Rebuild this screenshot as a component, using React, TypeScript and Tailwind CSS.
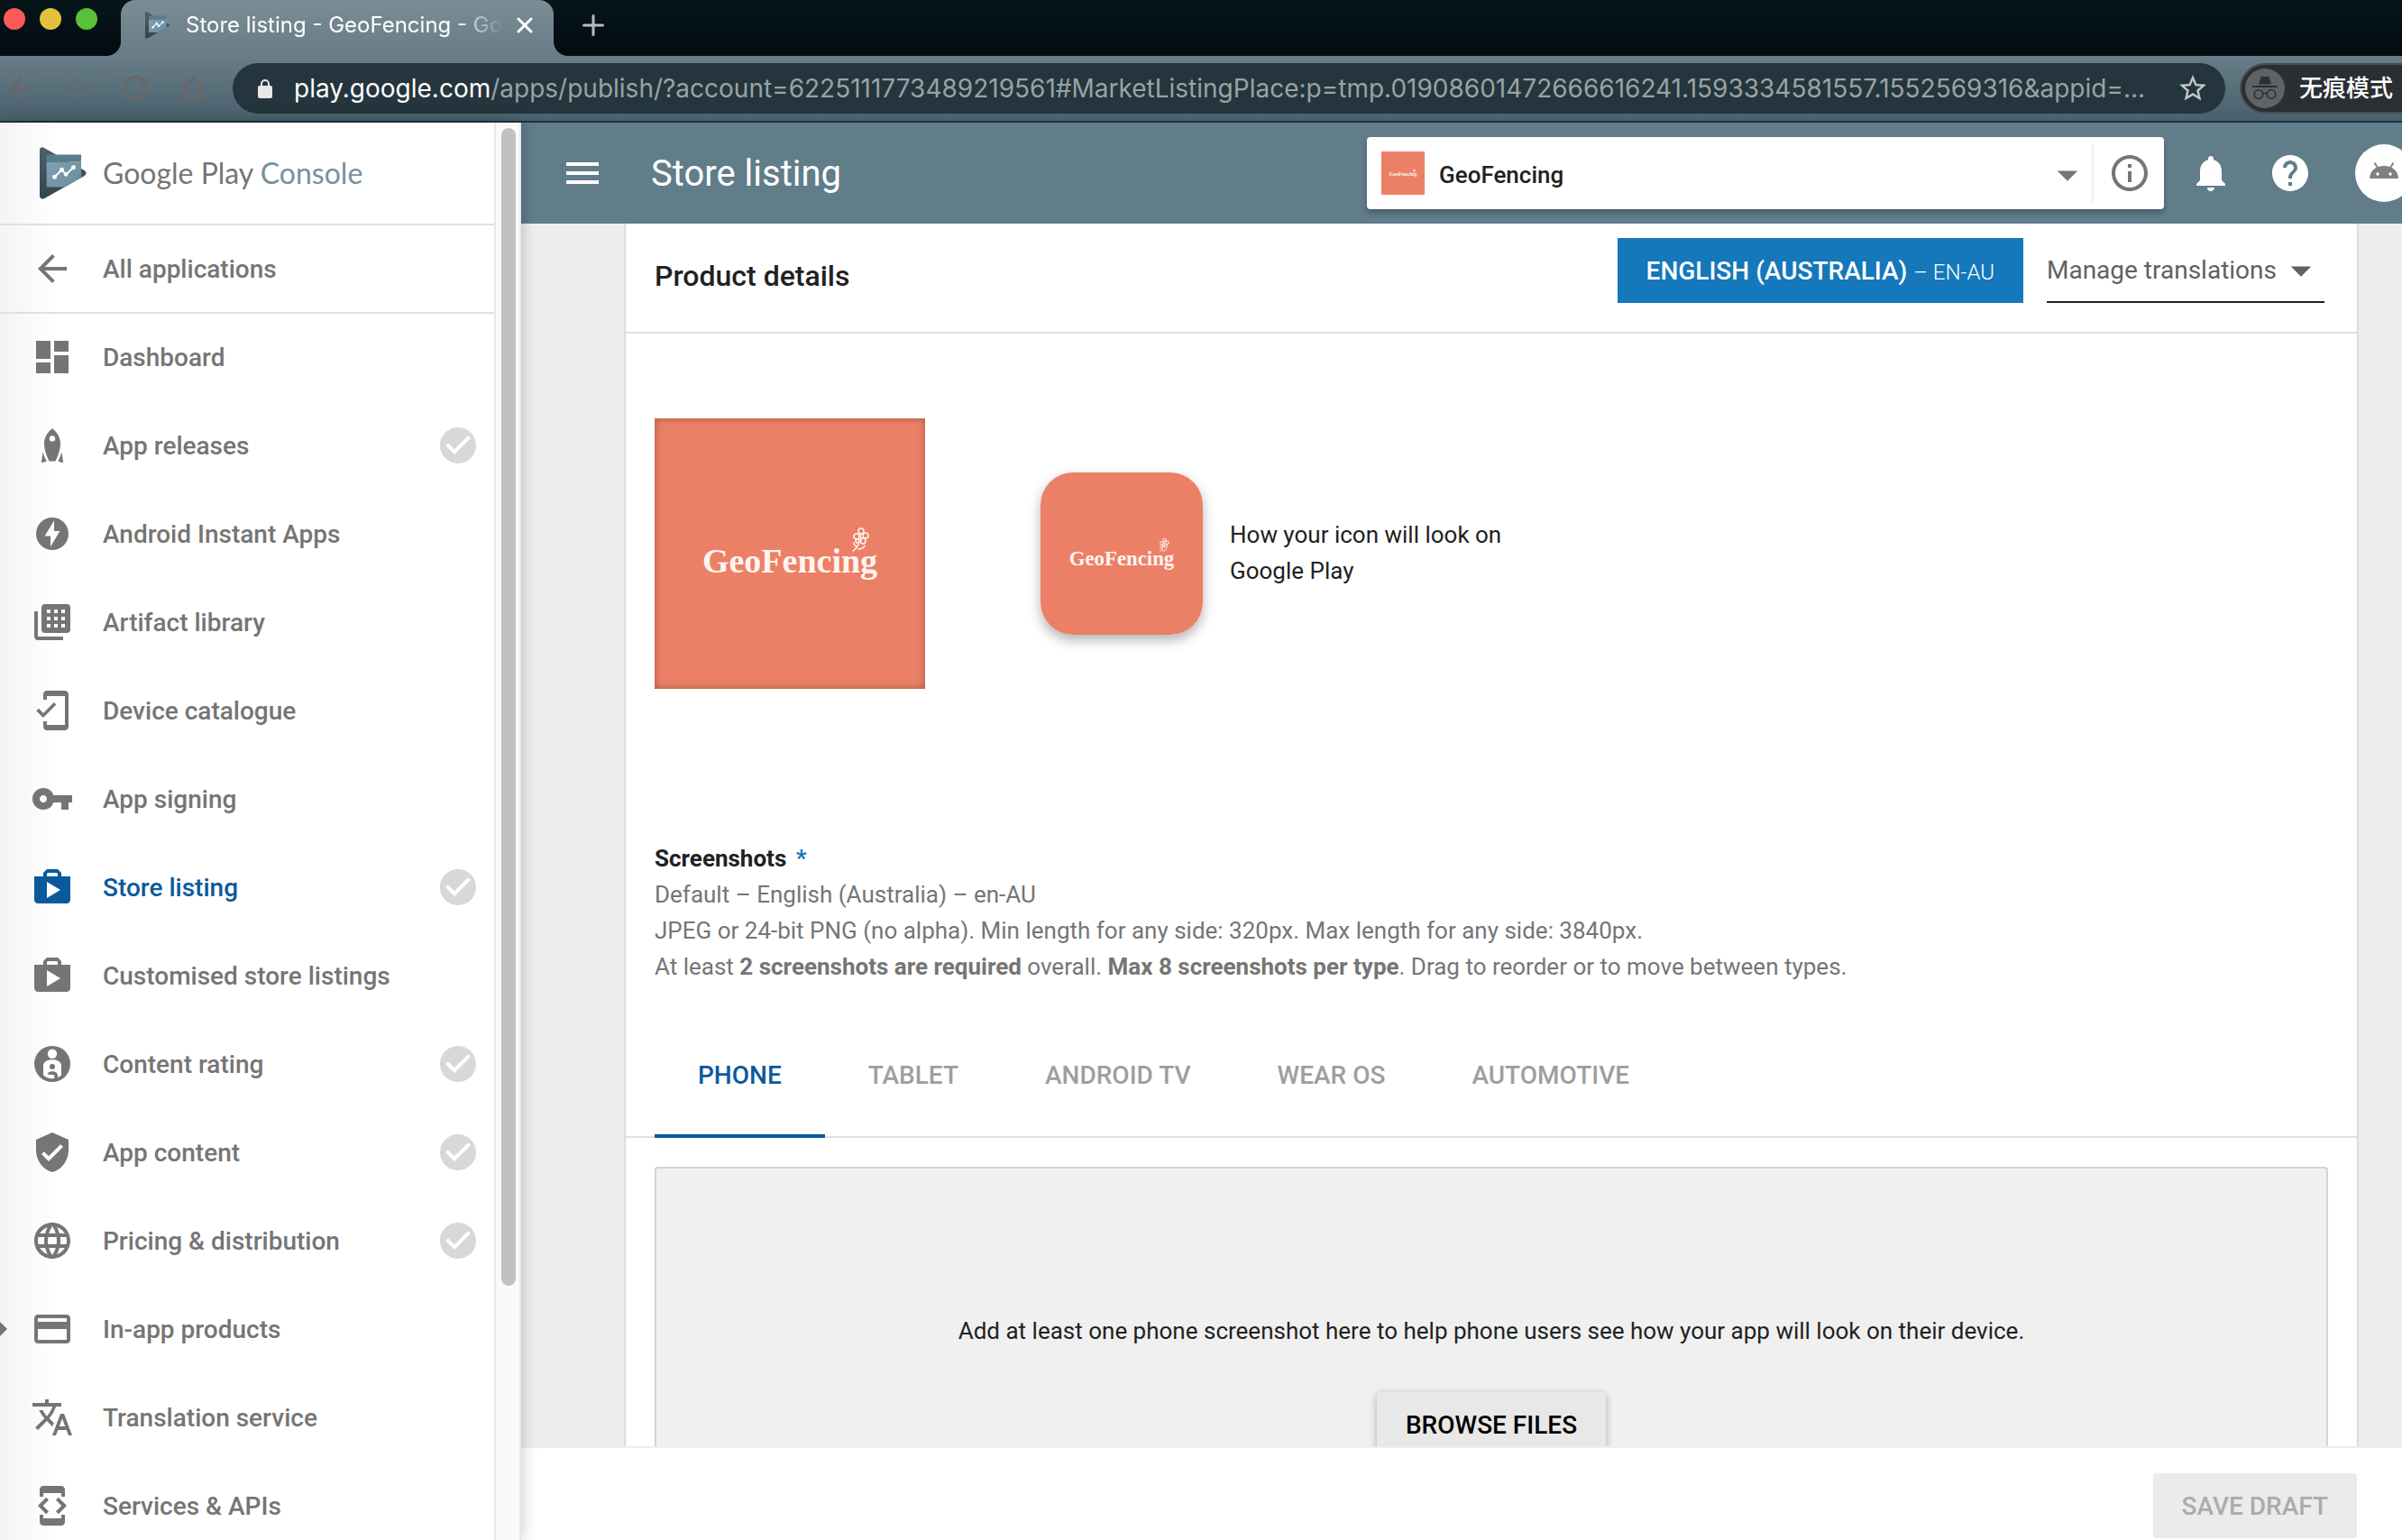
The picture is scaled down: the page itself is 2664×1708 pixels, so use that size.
import type { ComponentType, ReactNode } from 'react';
import {
  MdArrowBack,
  MdArrowDropDown,
  MdCheckCircle,
  MdCreditCard,
  MdDashboard,
  MdDeveloperMode,
  MdHelp,
  MdInfoOutline,
  MdLanguage,
  MdMenu,
  MdMobileFriendly,
  MdNotifications,
  MdStarBorder,
  MdTranslate,
  MdVerifiedUser,
  MdVpnKey,
} from 'react-icons/md';

type IconProps = { className?: string };

function Glyph({ className, children }: IconProps & { children: ReactNode }) {
  return (
    <svg viewBox="0 0 24 24" fill="currentColor" className={className} aria-hidden="true">
      {children}
    </svg>
  );
}

function RocketIcon({ className }: IconProps) {
  return (
    <Glyph className={className}>
      <path
        fillRule="evenodd"
        d="M12 2.6c-2.6 2-4.5 5-4.5 8.2 0 3.600 1.300 7.200 2.800 10h3.400c1.500-2.800 2.800-6.400 2.800-10 0-3.200-1.900-6.200-4.500-8.200zm0 4a1.600 1.600 0 1 1 0 3.200 1.600 1.600 0 0 1 0-3.200z"
      />
      <path d="M6.800 15.600L5.900 21.700l3-.9c-1-1.600-1.700-3.400-2.100-5.200zM17.200 15.600l.9 6.100-3-.9c1-1.600 1.700-3.400 2.100-5.200z" />
    </Glyph>
  );
}

function BoltIcon({ className }: IconProps) {
  return (
    <Glyph className={className}>
      <path
        fillRule="evenodd"
        d="M12 3a9 9 0 1 0 0 18 9 9 0 0 0 0-18zm1 1.800v5.700h3.200L11 19.300v-6.100H7.800z"
      />
    </Glyph>
  );
}

function LibraryIcon({ className }: IconProps) {
  return (
    <Glyph className={className}>
      <path d="M4 6H2v14c0 1.100.9 2 2 2h14v-2H4z" />
      <path
        fillRule="evenodd"
        d="M8 2h12a2 2 0 0 1 2 2v12a2 2 0 0 1-2 2H8a2 2 0 0 1-2-2V4a2 2 0 0 1 2-2zm1 3v2h2V5zm4 0v2h2V5zm4 0v2h2V5zM9 9v2h2V9zm4 0v2h2V9zm4 0v2h2V9zm-8 4v2h2v-2zm4 0v2h2v-2zm4 0v2h2v-2z"
      />
    </Glyph>
  );
}

function StoreIcon({ className }: IconProps) {
  return (
    <Glyph className={className}>
      <path
        fillRule="evenodd"
        d="M17 6V4l-2-2H9L7 4v2H2v13c0 1.100.9 2 2 2h16c1.100 0 2-.9 2-2V6zM9 4.500L9.500 4h5l.5.500V6H9zM9 18V9l7.500 4.500z"
      />
    </Glyph>
  );
}

function RatingIcon({ className }: IconProps) {
  return (
    <Glyph className={className}>
      <circle cx="12" cy="12" r="10" />
      <g fill="#fff">
        <circle cx="12" cy="6.400" r="2.600" />
        <path d="M7 18.200v-5.200c0-2.200 2.200-3.400 5-3.400s5 1.200 5 3.400v5.200c-1.300 1.200-3 1.900-5 1.900s-3.700-.7-5-1.900z" />
      </g>
      <circle cx="12" cy="13.500" r="1.500" />
      <path d="M9.200 17.800c.3-1.100 1.400-1.700 2.800-1.700 1.700 0 3 .8 3 2.200v2h-1.900v-2.200z" />
    </Glyph>
  );
}

function PlayLogo({ className }: IconProps) {
  return (
    <svg viewBox="133 488 157 174" className={className} aria-hidden="true">
      <defs>
        <linearGradient id="logo-dark" x1="0" y1="0" x2="0" y2="1">
          <stop offset="0" stopColor="#4e6169" />
          <stop offset="1" stopColor="#35444e" />
        </linearGradient>
        <linearGradient id="logo-pane" x1="0" y1="0" x2="1" y2="1">
          <stop offset="0" stopColor="#7ea1b3" />
          <stop offset="1" stopColor="#6a8c9c" />
        </linearGradient>
      </defs>
      <path d="M133 496q1-10 12-7L283 566q12 9 0 18L148 660q-13 4-15-8z" fill="url(#logo-dark)" />
      <path d="M156 537h116v53L216 622h-56q-4 0-4-4z" fill="url(#logo-pane)" />
      <path d="M156 513h116v24H156z" fill="#5b7c8b" />
      <path d="M183 588l24-24 14 16 25-24" fill="none" stroke="#fff" strokeWidth="6" />
      <g fill="#fff">
        <circle cx="183" cy="588" r="7.500" />
        <circle cx="207" cy="564" r="7.500" />
        <circle cx="221" cy="579" r="7" />
        <circle cx="246" cy="556" r="7.500" />
      </g>
    </svg>
  );
}

function GeoFencingArt({ className }: IconProps) {
  return (
    <svg viewBox="0 0 300 300" className={className} role="img" aria-label="GeoFencing icon">
      <rect width="300" height="300" fill="#ec8066" />
      <text
        x="150"
        y="171"
        textAnchor="middle"
        fill="#fff5f0"
        className="font-['Liberation_Serif',serif] text-[38px] font-bold"
      >
        GeoFencing
      </text>
      <g fill="none" stroke="#fff5f0" strokeWidth="1.500" strokeLinecap="round">
        <circle cx="229" cy="125" r="3" />
        <circle cx="234" cy="130" r="3" />
        <circle cx="224" cy="131" r="3" />
        <circle cx="231" cy="136" r="3" />
        <circle cx="225" cy="136" r="2" />
        <path d="M228 128l1 8M226 138c0 4-3 7-6 9M221 138c0 3 2 4 4 4M226 145c4 0 6-2 7-4" />
      </g>
    </svg>
  );
}

type NavItem = {
  label: string;
  icon: ComponentType<IconProps>;
  done?: boolean;
  active?: boolean;
  expandable?: boolean;
};

const navItems: NavItem[] = [
  { label: 'Dashboard', icon: MdDashboard },
  { label: 'App releases', icon: RocketIcon, done: true },
  { label: 'Android Instant Apps', icon: BoltIcon },
  { label: 'Artifact library', icon: LibraryIcon },
  { label: 'Device catalogue', icon: MdMobileFriendly },
  { label: 'App signing', icon: MdVpnKey },
  { label: 'Store listing', icon: StoreIcon, done: true, active: true },
  { label: 'Customised store listings', icon: StoreIcon },
  { label: 'Content rating', icon: RatingIcon, done: true },
  { label: 'App content', icon: MdVerifiedUser, done: true },
  { label: 'Pricing & distribution', icon: MdLanguage, done: true },
  { label: 'In-app products', icon: MdCreditCard, expandable: true },
  { label: 'Translation service', icon: MdTranslate },
  { label: 'Services & APIs', icon: MdDeveloperMode },
];

function BrowserChrome() {
  return (
    <header className="shrink-0 font-[Inter,'Noto_Sans_CJK_SC',sans-serif]">
      <div className="flex h-[62px] bg-linear-to-b from-[#07161b] to-[#020b10]">
        <div className="flex w-[134px] shrink-0 gap-4 pt-[9px] pl-1">
          <span className="size-6 rounded-full bg-[#fb5a56]" />
          <span className="size-6 rounded-full bg-[#e5bf3e]" />
          <span className="size-6 rounded-full bg-[#59c03a]" />
        </div>
        <div className="relative flex h-full w-[480px] shrink-0 items-center rounded-t-2xl bg-linear-to-b from-[#7b8d96] to-[#687d87] pr-5 pb-1.5 pl-[27px]">
          <svg viewBox="0 0 16 16" className="absolute bottom-0 -left-4 size-4" aria-hidden="true">
            <path d="M16 0v16H0A16 16 0 0 0 16 0z" fill="#687d87" />
          </svg>
          <svg viewBox="0 0 16 16" className="absolute -right-4 bottom-0 size-4" aria-hidden="true">
            <path d="M0 0v16h16A16 16 0 0 1 0 0z" fill="#687d87" />
          </svg>
          <PlayLogo className="h-[30px] w-[27px] shrink-0" />
          <span className="ml-[18px] flex-1 overflow-hidden mask-r-from-85% text-2xl leading-8 whitespace-nowrap text-white">
            Store listing - GeoFencing - Go
          </span>
          <button aria-label="Close tab" className="ml-3 shrink-0 text-white">
            <svg viewBox="0 0 24 24" className="size-6" fill="none" stroke="currentColor" strokeWidth="3" strokeLinecap="round">
              <path d="M5 5l14 14M19 5L5 19" />
            </svg>
          </button>
        </div>
        <button aria-label="New tab" className="mb-1.5 ml-8 self-center text-[#b6bcbf]">
          <svg viewBox="0 0 24 24" className="size-6" fill="none" stroke="currentColor" strokeWidth="3" strokeLinecap="round">
            <path d="M12 1.500v21M1.500 12h21" />
          </svg>
        </button>
      </div>
      <div className="flex h-[74px] items-center overflow-hidden border-b-2 border-[#1d333d] bg-linear-to-b from-[#687d87] to-[#49616d]">
        <div className="flex w-[258px] shrink-0 items-center gap-9 pl-2 text-[#6a6668]">
          <button aria-label="Back">
            <svg viewBox="0 0 28 28" className="size-7" fill="none" stroke="currentColor" strokeWidth="3">
              <path d="M27 14H4M15 2.500L3.500 14 15 25.500" />
            </svg>
          </button>
          <button aria-label="Forward" className="opacity-40">
            <svg viewBox="0 0 28 28" className="size-7" fill="none" stroke="currentColor" strokeWidth="3">
              <path d="M1 14h23M13 2.500L24.500 14 13 25.500" />
            </svg>
          </button>
          <button aria-label="Reload">
            <svg viewBox="0 0 28 28" className="size-7" fill="none" stroke="currentColor" strokeWidth="3.200">
              <path d="M25 18A12 12 0 1 1 23 6" />
              <path d="M28 1v11H17z" fill="currentColor" stroke="none" />
            </svg>
          </button>
          <button aria-label="Home">
            <svg viewBox="0 0 28 28" className="size-7" fill="none" stroke="currentColor" strokeWidth="3">
              <path d="M2 14.500L14 2.500l12 12M6 12v13h16V12" />
            </svg>
          </button>
        </div>
        <div className="flex h-14 flex-1 items-center rounded-full bg-[#24353d] pr-[18px] pl-7">
          <svg viewBox="0 0 16 21" className="h-[21px] w-4 shrink-0" aria-hidden="true">
            <rect y="7" width="16" height="14" rx="2" fill="#e8e8e8" />
            <path d="M4 8V5a4 4 0 0 1 8 0v3" fill="none" stroke="#e8e8e8" strokeWidth="2" />
          </svg>
          <p className="ml-6 flex-1 overflow-hidden text-[28px] leading-9 whitespace-nowrap text-[#9aa2a6]">
            <span className="text-white">play.google.com</span>
            /apps/publish/?account=6225111773489219561#MarketListingPlace:p=tmp.01908601472666616241.1593334581557.1552569316&amp;appid=...
          </p>
          <button aria-label="Bookmark this page" className="shrink-0 text-[#c6c6c6]">
            <MdStarBorder className="size-9" />
          </button>
        </div>
        <div className="-mr-8 ml-4 flex h-14 w-[212px] shrink-0 items-center gap-4 rounded-full border-2 border-[#4b4e52] bg-[#2b2e33] pl-1">
          <svg viewBox="0 0 44 44" className="size-11 shrink-0" aria-hidden="true">
            <circle cx="22" cy="22" r="22" fill="#5f6368" />
            <path d="M15 17.500l2.500-8q.5-1.500 2-1l2.500.800 2.500-.8q1.500-.5 2 1l2.500 8z" fill="#2b2e33" />
            <path d="M8 20h28" stroke="#2b2e33" strokeWidth="2" />
            <g fill="none" stroke="#2b2e33" strokeWidth="1.600">
              <circle cx="15" cy="28.500" r="4.700" />
              <circle cx="29" cy="28.500" r="4.700" />
              <path d="M19.700 28q2.300-1.500 4.600 0" />
            </g>
          </svg>
          <span className="text-[26px] leading-8 font-medium whitespace-nowrap text-white">无痕模式</span>
        </div>
      </div>
    </header>
  );
}

function Sidebar() {
  return (
    <aside className="z-10 flex w-[578px] shrink-0 overflow-hidden bg-white shadow-[0_0_16px_rgba(0,0,0,0.25)]">
      <div className="min-w-0 flex-1 bg-linear-to-r from-[#f4f4f4] to-white to-[64px]">
        <a href="#home" className="flex h-[114px] items-center border-b-2 border-[#e0e0e0] pl-11">
          <PlayLogo className="h-[58px] w-[52px] shrink-0" />
          <span className="ml-[18px] font-[Lato,sans-serif] text-[32px] leading-10 whitespace-nowrap text-[#757575]">
            Google Play <span className="text-[#78909c]">Console</span>
          </span>
        </a>
        <a href="#all" className="flex h-[98px] items-center gap-8 border-b-2 border-[#e0e0e0] pl-[34px] text-[28px] leading-9 font-medium text-[#757575]">
          <MdArrowBack className="size-12 shrink-0" />
          <span className="pt-0.5">All applications</span>
        </a>
        <nav className="flex flex-col gap-0.5">
          {navItems.map(({ label, icon: Icon, done, active, expandable }) => (
            <a
              key={label}
              href="#nav"
              className={
                active
                  ? 'relative flex h-24 items-center gap-8 pr-4 pl-[34px] text-[28px] leading-9 font-medium text-[#0b599c]'
                  : 'relative flex h-24 items-center gap-8 pr-4 pl-[34px] text-[28px] leading-9 font-medium text-[#757575]'
              }
            >
              {expandable && (
                <svg viewBox="0 0 8 16" className="absolute top-10 left-0 h-4 w-2" aria-hidden="true">
                  <path d="M0 0l8 8-8 8z" fill="currentColor" />
                </svg>
              )}
              <Icon className="size-12 shrink-0" />
              <span className="flex-1 pt-0.5 whitespace-nowrap">{label}</span>
              {done && <MdCheckCircle className="size-12 shrink-0 text-[#d8d8d8]" />}
            </a>
          ))}
        </nav>
      </div>
      <div className="w-[30px] shrink-0 border-x-2 border-[#e8e8e8] bg-[#fafafa] pt-1.5 pr-1 pl-1.5">
        <div className="h-[82%] rounded-full bg-[#c1c1c1]" />
      </div>
    </aside>
  );
}

function TopBar() {
  return (
    <div className="z-[5] flex h-28 shrink-0 items-center bg-[#607d89] pl-11 text-white">
      <button aria-label="Toggle menu">
        <MdMenu className="size-12" />
      </button>
      <h1 className="ml-[52px] flex-1 pt-0.5 text-[40px] leading-12 whitespace-nowrap">Store listing</h1>
      <div className="flex h-20 w-[884px] items-center rounded bg-white pl-4 shadow-[0_4px_6px_rgba(0,0,0,0.25)]">
        <GeoFencingArt className="size-12 shrink-0" />
        <button className="flex flex-1 items-center justify-between pt-1 pl-4 text-left text-[26px] leading-8 font-medium text-[#212121]">
          GeoFencing
          <MdArrowDropDown className="size-[54px] text-[#757575]" />
        </button>
        <div className="flex h-16 items-center border-l-2 border-[#eeeeee] pr-3.5 pl-4">
          <button aria-label="App information" className="text-[#757575]">
            <MdInfoOutline className="size-12" />
          </button>
        </div>
      </div>
      <button aria-label="Notifications" className="ml-7">
        <MdNotifications className="size-12" />
      </button>
      <button aria-label="Help" className="ml-10">
        <MdHelp className="size-12" />
      </button>
      <button aria-label="Account" className="-mr-3 ml-12 flex size-16 shrink-0 justify-center rounded-full bg-white pt-5">
        <svg viewBox="0 0 32 18" className="h-[18px] w-8" aria-hidden="true">
          <path d="M0 18C0.500 9 7 4 16 4s15.500 5 16 14z" fill="#808080" />
          <path d="M9 6L5.500.500M23 6L26.500.500" stroke="#808080" strokeWidth="2" />
          <circle cx="9" cy="13" r="1.700" fill="#fff" />
          <circle cx="23" cy="13" r="1.700" fill="#fff" />
        </svg>
      </button>
    </div>
  );
}

const deviceTabs = ['PHONE', 'TABLET', 'ANDROID TV', 'WEAR OS', 'AUTOMOTIVE'];

function ProductDetails() {
  return (
    <section className="mr-[50px] ml-[116px] bg-white text-[26px] leading-10 text-[#212121] shadow-[0_0_3px_rgba(0,0,0,0.25)]">
      <div className="flex h-[122px] items-start border-b-2 border-[#e0e0e0] px-8 pt-4">
        <h2 className="flex-1 pt-[22px] text-[32px] leading-10 font-medium">Product details</h2>
        <button className="h-18 bg-[#1478bb] px-8 pt-0.5 text-[28px] font-medium whitespace-nowrap text-white">
          ENGLISH (AUSTRALIA) <span className="text-2xl font-light">– EN-AU</span>
        </button>
        <button className="mr-1 ml-[26px] flex h-18 items-center border-b-2 border-[#212121] pt-0.5 text-[28px] whitespace-nowrap text-[#616161]">
          Manage translations
          <MdArrowDropDown className="-mr-px size-[54px]" />
        </button>
      </div>

      <div className="flex h-[492px] items-start px-8 pt-[94px]">
        <div className="relative size-[300px] shrink-0">
          <GeoFencingArt className="size-full" />
          <div className="absolute inset-0 shadow-[inset_0_0_10px_rgba(0,0,0,0.3)]" />
        </div>
        <div className="mt-[60px] ml-32 flex items-center gap-[30px]">
          <div className="size-[180px] shrink-0 overflow-hidden rounded-[36px] shadow-[0_6px_14px_rgba(0,0,0,0.3)]">
            <GeoFencingArt className="size-full" />
          </div>
          <p className="pb-0.5">
            How your icon will look on
            <br />
            Google Play
          </p>
        </div>
      </div>

      <div className="px-8 pt-[70px] text-[#757575]">
        <h3 className="font-bold text-[#212121]">
          Screenshots <span className="ml-1 text-[#1478bb]">*</span>
        </h3>
        <p>Default – English (Australia) – en-AU</p>
        <p>JPEG or 24-bit PNG (no alpha). Min length for any side: 320px. Max length for any side: 3840px.</p>
        <p>
          At least <strong>2 screenshots are required</strong> overall. <strong>Max 8 screenshots per type</strong>. Drag to
          reorder or to move between types.
        </p>
      </div>

      <div role="tablist" className="mt-[34px] flex border-b-2 border-[#e0e0e0] px-8">
        {deviceTabs.map((tab, i) => (
          <button
            key={tab}
            role="tab"
            aria-selected={i === 0}
            className={
              i === 0
                ? '-mb-0.5 h-[136px] border-b-4 border-[#0b599c] px-12 pt-0.5 text-[28px] font-medium text-[#0b599c]'
                : '-mb-0.5 h-[136px] border-b-4 border-transparent px-12 pt-0.5 text-[28px] font-medium text-[#9e9e9e]'
            }
          >
            {tab}
          </button>
        ))}
      </div>

      <div className="px-8 pt-8 pb-8">
        <div className="flex h-[400px] flex-col items-center rounded border-2 border-[#d3d3d3] bg-[#f0f0f0] pt-40">
          <p>Add at least one phone screenshot here to help phone users see how your app will look on their device.</p>
          <button className="mt-12 h-18 rounded bg-[#e8e8e8] px-8 pt-0.5 text-[28px] font-medium text-black shadow-[0_2px_8px_rgba(0,0,0,0.3)]">
            BROWSE FILES
          </button>
        </div>
      </div>
    </section>
  );
}

export default function App() {
  return (
    <div className="flex h-screen flex-col overflow-hidden bg-white font-[Roboto,'Noto_Sans_CJK_SC',sans-serif]">
      <BrowserChrome />
      <div className="flex min-h-0 flex-1">
        <Sidebar />
        <div className="flex min-w-0 flex-1 flex-col">
          <TopBar />
          <main className="min-h-0 flex-1 overflow-hidden bg-[#eeeeee]">
            <ProductDetails />
          </main>
          <footer className="flex shrink-0 justify-end border-t-2 border-[#eeeeee] bg-white pt-7 pr-[50px] pb-0.5">
            <button disabled className="h-18 rounded bg-[#ebebeb] px-8 pt-0.5 text-[28px] leading-10 font-medium text-[#ababab]">
              SAVE DRAFT
            </button>
          </footer>
        </div>
      </div>
    </div>
  );
}
